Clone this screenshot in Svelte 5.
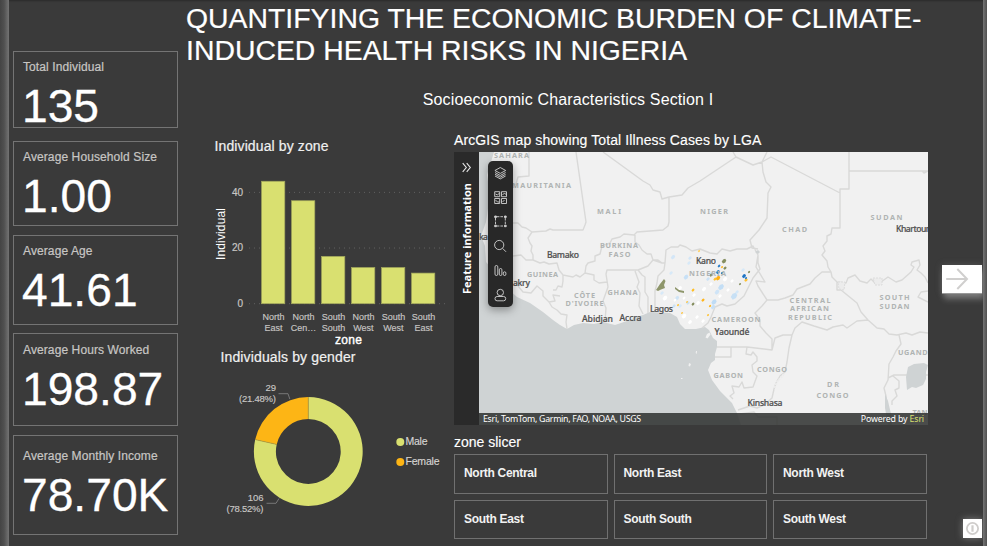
<script>
  const cards = [
    { label: 'Total Individual', value: '135', h: 77, gap: 13, pad: 7 },
    { label: 'Average Household Size', value: '1.00', h: 85, gap: 9, pad: 7 },
    { label: 'Average Age', value: '41.61', h: 90, gap: 8, pad: 7 },
    { label: 'Average Hours Worked', value: '198.87', h: 93, gap: 9, pad: 8 },
    { label: 'Average Monthly Income', value: '78.70K', h: 100, gap: 0, pad: 12 }
  ];

  const bars = [
    { l1: 'North', l2: 'East', v: 44 },
    { l1: 'North', l2: 'Cen…', v: 37 },
    { l1: 'South', l2: 'South', v: 17 },
    { l1: 'North', l2: 'West', v: 13 },
    { l1: 'South', l2: 'West', v: 13 },
    { l1: 'South', l2: 'East', v: 11 }
  ];
  const unit = 2.783;
  const base = 303.7;

  const zones = ['North Central', 'North East', 'North West', 'South East', 'South South', 'South West'];

  const land =
    'M494 152L487 175L490 195L486 222L481 236L485 246L486 262L497 275L507 288L517 297L530 303L543 312L553 320L560 325L567 329L574 325L583 323L594 324L603 322L615 325L627 321L636 317L643 315L650 312L670 313L677 317L680 324L685 329L696 329L705 327L709 330L713 338L717 341L717 347L715 354L715 360L711 363L708 370L712 380L720 391L732 403L737 413L741 425L928 425V152Z';

  const borders = [
    'M529 152L529 176L518 177L516 184L502 188',
    'M576 152L586 222L585 225L583 230L553 230L550 229L546 231L532 232L526 228L522 227L518 223L513 223',
    'M532 232L528 238L530 243L532 246L531 251L533 255L533 260',
    'M513 256L521 255L526 260L533 260L540 263L544 262L549 264L557 263L559 270L563 275L563 281L562 287L558 286L556 290L553 290',
    'M518 286L523 292L531 293L537 286L543 291L543 296L549 302L555 301L553 295L560 296',
    'M563 275L573 277L576 275L580 277L585 273L594 275L594 280L599 283L607 282',
    'M549 302L552 307L557 310L561 314L567 315L566 322L567 329',
    'M585 273L586 266L588 263L595 261L595 256L600 254L602 246L610 243L612 239L620 237L624 234L634 235L637 232L663 230L668 226L669 222L669 197L662 199L660 192L653 190L650 185L643 181L603 152',
    'M669 197L682 195L688 188L700 181L736 157L733 152',
    'M736 157L753 165L762 162L767 152',
    'M762 162L763 172L766 182L771 187L768 193L767 218L759 230L750 240L752 248L758 249',
    'M762 162L771 157L840 193V228H832L831 234L827 236V241L823 246L825 251L822 255L827 261L828 267L831 272L832 277L837 282L837 290L841 290L857 303L861 312L868 320',
    'M849 152V189H840V194M849 171H928M922 171L924 173L928 171',
    'M635 235L635 242L639 245L642 250L647 254L651 254L653 260L658 260L662 263L665 263L666 250L671 247L678 247L680 245L686 247L692 251L700 249L710 253L717 254L722 249L730 251L737 249L747 249L753 246L758 255L758 263L760 269L753 278L748 288L744 296L735 304L727 306L722 304L715 307L711 317L708 323L702 328',
    'M665 263L664 270L658 276L657 283L655 291L655 312',
    'M662 263L653 260L648 266L638 270L642 275L645 277V292L648 297L648 313',
    'M638 270H607L606 274L608 287L603 301L606 308L605 322',
    'M635 271L639 282L637 287L640 293L639 306L643 314',
    'M758 255L756 267L765 282L756 281L758 286L767 300L762 306L755 313L760 320L760 326L766 333L772 339L772 350L747 347H717',
    'M767 300L778 300L785 298L793 295L797 289L810 284L815 278L822 272L831 272',
    'M837 282L846 283L848 278L855 275L860 281L867 283L871 279L876 284L881 282L888 277L896 282L902 280L911 272L914 267L911 265L912 262L919 260L920 265L917 270L921 273L925 277L928 283M928 291L921 292L918 297L928 302',
    'M772 350L775 338L783 335L792 335L795 328L802 322L814 326L827 330L833 327L843 325L847 328L857 321L868 320L877 328L884 329L889 334L897 335L906 333L912 335L920 332L928 333',
    'M792 335L789 348L787 362L785 372L780 376L776 383L774 389L772 398L764 405L757 408L750 406L738 410',
    'M747 347L746 354L751 355L753 352L757 357V361L752 365L753 372L757 376L753 387L744 388L742 382L739 387L732 386L734 393L730 396L733 399',
    'M731 347V357H715',
    'M899 335L901 344L896 351L893 357L889 364L888 380L884 388L886 396L887 405',
    'M888 378L894 375H928M893 376L899 381V388L895 390L897 396L892 401L892 405',
    'M740 414L754 412L758 417H777V425'
  ].join('');

  const countries = [
    ['SAHARA', 494, 157.5, 35], ['MAURITANIA', 512, 188, 59], ['MALI', 597, 214.3, 24],
    ['NIGER', 700, 214.3, 28], ['CHAD', 782, 232.3, 25], ['SUDAN', 870.5, 220, 32],
    ['BURKINA', 600, 248.2, 38], ['FASO', 608.5, 256.7, 22], ['GUINEA', 527, 277.2, 31],
    ['CÔTE', 574, 298.2, 21], ["D'IVOIRE", 565.5, 306.3, 38], ['GHANA', 607.5, 295.3, 30],
    ['NIGERIA', 689, 276.3, 37], ['CAMEROON', 711.5, 321.8, 49], ['CENTRAL', 789.5, 302.8, 41],
    ['AFRICAN', 790, 311.3, 39], ['REPUBLIC', 788, 320, 44], ['SOUTH', 879.5, 300.3, 30],
    ['SUDAN', 879.5, 309, 30], ['GABON', 713.5, 377.8, 29.5], ['CONGO', 757, 372.2, 30],
    ['DR', 827, 386.7, 12], ['CONGO', 816.5, 397.7, 32], ['UGANDA', 898, 355.2, 35], ['TAN', 912.5, 415.3, 15]
  ];
  const cities = [
    ['Bamako', 547, 258, 32], ['akry', 513, 286, 17], ['ka', 479, 240, 9], ['Abidjan', 582, 322, 31],
    ['Accra', 619.5, 320.5, 22], ['Lagos', 650, 312, 23], ['Kano', 696, 263.5, 20],
    ['Yaoundé', 714.5, 335, 35], ['Kinshasa', 747.5, 406, 35], ['Khartoum', 896, 231.5, 38]
  ];

  // Scattered LGA polygons, drawn as small irregular cells: x, y, radius, fill
  const lga = [
    [673, 257, 2.2, '#d3e6f7'], [690, 258, 1.8, '#d3e6f7'], [689, 263, 1.8, '#d7e9f8'], [671, 273, 1.8, '#d7e9f8'],
    [686, 277, 2.4, '#c7e0f6'], [711, 274, 2, '#c7e0f6'], [721, 287, 3, '#c3def5'], [717, 292, 2.4, '#cfe4f7'],
    [734, 296, 3.3, '#c7e0f5'], [737, 292, 1.8, '#d5e8f8'], [665, 298, 2.4, '#fff'], [662, 293, 1.8, '#d7e9f8'],
    [677, 298, 2.2, '#cfe4f6'], [680, 306, 1.8, '#d7e9f8'], [714, 302, 2.7, '#bfdcf5'], [713, 307, 2.2, '#c7e0f5'],
    [688, 303, 1.7, '#cbe2f5'], [694, 295, 1.8, '#fff'], [698, 303, 2, '#fff'], [684, 316, 2.4, '#fff'],
    [697, 317, 1.8, '#fff'], [690, 322, 2, '#fff'], [703, 321, 1.8, '#fff'], [680, 288, 2, '#fff'],
    [704, 289, 2.2, '#fff'], [711, 284, 1.8, '#fff'], [725, 279, 2.3, '#fff'], [732, 281, 1.7, '#fff'],
    [743, 270, 1.8, '#d7e9f8'], [715, 262, 2, '#fff'], [708, 279, 1.8, '#cbe2f6'], [674, 306, 1.7, '#cbe2f6'],
    [675, 300, 1.5, '#fff'], [684, 298, 1.5, '#fff'], [720, 296, 1.8, '#fff'], [728, 290, 1.7, '#fff'],
    [693, 290, 1.5, '#ffbf27'], [699, 251, 1.2, '#ffd166'], [718, 278, 2.3, '#ffae12'], [715, 279, 1.6, '#ffc233'],
    [746, 280, 1.7, '#ffc233'], [703, 300, 1.6, '#ffb51d'], [710, 306, 1.2, '#ffb51d'], [678, 305, 1.1, '#ffc233'],
    [687, 302, 1, '#ffc233'], [722, 267, 1.1, '#ffb51d'], [708, 315, 1.1, '#ffc233'], [682, 313, 1, '#ffc233'],
    [719, 266, 1.4, '#2d7fc9'], [718, 272, 2, '#2d7fc9'], [722, 273, 1.2, '#1d6ab5'], [744, 276, 2, '#1f75c5'],
    [746, 278, 1.1, '#1f75c5'], [724, 261, 2.3, '#858e60'], [725, 268, 1.6, '#858e60'], [711, 275, 1.5, '#858e60'],
    [749, 272, 1.2, '#858e60'], [740, 284, 1.1, '#858e60'], [693, 304, 1.5, '#858e60']
  ];
  const cell = (x, y, r) =>
    `M${x - r} ${y + r * 0.3}l${r * 0.6} ${-r}l${r * 0.9} ${-r * 0.3}l${r * 0.5} ${r * 0.7}l${-r * 0.4} ${r * 0.9}l${-r} ${r * 0.5}z`;
</script>

<div class="page">
  <div class="edge left"></div>

  <aside>
    {#each cards as c}
      <section class="card" style="height:{c.h}px;margin-bottom:{c.gap}px;padding-top:{c.pad}px">
        <div class="label">{c.label}</div>
        <div class="value">{c.value}</div>
      </section>
    {/each}
  </aside>

  <main>
    <h1>QUANTIFYING THE ECONOMIC BURDEN OF CLIMATE-<br />INDUCED HEALTH RISKS IN NIGERIA</h1>
    <h2>Socioeconomic Characteristics Section I</h2>

    <div class="cols">
      <div class="charts">
        <svg width="264" height="414" viewBox="186 132 264 414">
          <text class="title" x="214.5" y="151" textLength="114">Individual by zone</text>
          {#each [0, 20, 40] as t}
            <line class="grid" x1="249" x2="446" y1={base - t * unit} y2={base - t * unit} />
            <text class="tick" x="243" y={base - t * unit + 3.4} text-anchor="end">{t}</text>
          {/each}
          {#each bars as b, i}
            <rect x={261.6 + i * 30} y={base - b.v * unit} width="23.2" height={b.v * unit} fill="#d9e070" stroke="#a2a75c" stroke-width=".7" />
            <text class="cat" x={273.4 + i * 30} y="320" text-anchor="middle">{b.l1}</text>
            <text class="cat" x={273.4 + i * 30} y="331" text-anchor="middle">{b.l2}</text>
          {/each}
          <text class="axis" transform="translate(225.3 234) rotate(-90)" text-anchor="middle" textLength="52">Individual</text>
          <text class="axis strong" x="348.5" y="343.5" text-anchor="middle" textLength="27">zone</text>

          <text class="title" x="220.5" y="362" textLength="135">Individuals by gender</text>
          <g transform="translate(308.3 451.5)">
            <path d="M0 -54.4A54.4 54.4 0 1 1 -53.1 -11.9L-31.6 -7.1A32.4 32.4 0 1 0 0 -32.4Z" fill="#d9e070" />
            <path d="M-53.1 -11.9A54.4 54.4 0 0 1 0 -54.4V-32.4A32.4 32.4 0 0 0 -31.6 -7.1Z" fill="#fdb515" />
            <path d="M0 -54.4V-32.4M-53.1 -11.9L-31.6 -7.1" stroke="#a99a44" stroke-width=".7" />
          </g>
          <path class="leader" d="M278.5 393.7H288L289.8 399M266.5 503.3H276L279 498.5" />
          <text class="data" x="276" y="391" text-anchor="end">29</text>
          <text class="data" x="276" y="402" text-anchor="end" textLength="37">(21.48%)</text>
          <text class="data" x="263.5" y="501" text-anchor="end">106</text>
          <text class="data" x="263.5" y="512" text-anchor="end" textLength="37">(78.52%)</text>
          <circle cx="400.3" cy="442" r="4" fill="#d9e070" />
          <circle cx="400.3" cy="462" r="4" fill="#fdb515" />
          <text class="legend" x="405.5" y="445.3" textLength="22">Male</text>
          <text class="legend" x="405.5" y="465.3" textLength="34">Female</text>
        </svg>
      </div>

      <div class="mapcol">
        <h3 class="maptitle">ArcGIS map showing Total Illness Cases by LGA</h3>
        <div class="mapbox">
          <div class="info">
            <svg width="25" height="273" viewBox="0 0 25 273">
              <path d="M8.7 11.2L12.3 15.5L8.7 19.8M12.7 11.2L16.3 15.5L12.7 19.8" fill="none" stroke="#e8e8e8" stroke-width="1.1" />
              <text transform="translate(16.8 142) rotate(-90)" textLength="111" lengthAdjust="spacingAndGlyphs">Feature information</text>
            </svg>
          </div>
          <div class="map">
            <svg width="449" height="273" viewBox="479 152 449 273">
              <rect x="479" y="152" width="449" height="273" fill="#cfd3d4" />
              <path d={land} fill="#f1f1f1" />
              <path d="M707 334l2.5 -1.5l1 2l-3 4l-2 -1zM696 351l1 0l-.3 3l-1 -1zM689 363l2 1l-1 2.5l-1.5 -.5zM681 378l1.5 0v1h-1.5z" fill="#f1f1f1" />
              <path d={borders} fill="none" stroke="#d9d9d8" stroke-width="1.4" stroke-linejoin="round" />
              <path d="M908 367L914 364L924 363L928 365L926 372L926 379L923 385L916 388L912 387L907 390L906 377ZM885 394L888 401L891 414L892 425H888L885 408ZM755 252l3 -2l2 2l-2 2z" fill="#cfd3d4" />
              <path d="M873 278l9 0l0 7l-7 0zM838 282l7 0l-1 8l-5 -1z" fill="#ececec" stroke="#dcdcdc" stroke-dasharray="2 1" />
              <path d="M784 374l-7 8l-3 7" fill="none" stroke="#ededed" stroke-width="2" stroke-dasharray="2 1" />
              {#each lga as p}
                <path d={cell(p[0], p[1], p[2])} fill={p[3]} />
              {/each}
              <path d="M656 290L660 284L664 279L665.5 281L664 285L665 288L661 289.5L658 291ZM675 287L679 290L684 291L684 293L679 292L675 289Z" fill="#8e966b" />
              {#each countries as c}
                <text class="country" x={c[1]} y={c[2]} textLength={c[3]}>{c[0]}</text>
              {/each}
              {#each cities as c}
                <text class="city" x={c[1]} y={c[2]} textLength={c[3]}>{c[0]}</text>
              {/each}
            </svg>
            <div class="tools">
              <svg width="25" height="146" viewBox="0 0 25 146" fill="none" stroke="#d2d2d2" stroke-width=".9" stroke-linejoin="round">
                <path d="M12.3 6.5L17.7 9.5L12.3 12.4L6.9 9.5ZM7 11.5L12.3 14.5L17.6 11.5M7 13.3L12.3 16.2L17.6 13.3M7 15L12.3 17.9L17.6 15" />
                <path d="M6.7 30.7h5v5h-5zM13.5 30.7h5v5h-5zM6.7 37.5h5v5h-5zM13.5 37.5h5v5h-5zM7.5 33l2 1l2 -2M14.5 34l2 -2l2 2M7.5 39l2 2l2 0M14.5 41l2 -2" />
                <path d="M8.8 55.7h7.3M8.8 65h7.3M7.5 57v6.7M17.3 57v6.7" stroke-dasharray="2.6 1" />
                <path d="M6.7 55h1.7v1.5h-1.7zM16.5 55h1.7v1.5h-1.7zM6.7 64.2h1.7v1.5h-1.7zM16.5 64.2h1.7v1.5h-1.7z" fill="#d2d2d2" />
                <circle cx="11.2" cy="84" r="4.6" /><path d="M14.6 87.4L18 90.8" />
                <rect x="7" y="104.5" width="2.8" height="10" rx="1.4" /><rect x="11.3" y="107.5" width="2.6" height="7" rx="1.3" /><rect x="15.3" y="110.8" width="2.6" height="3.7" rx="1.3" />
                <circle cx="12.3" cy="131.5" r="3.2" /><rect x="7" y="135.5" width="10.7" height="4.3" rx="2.1" />
              </svg>
            </div>
            <div class="credits"><span class="src">Esri, TomTom, Garmin, FAO, NOAA, USGS</span><span class="pow">Powered by <b>Esri</b></span></div>
          </div>
        </div>
        <h3 class="slicer">zone slicer</h3>
        <div class="zones">
          {#each zones as z}
            <button>{z}</button>
          {/each}
        </div>
      </div>
    </div>
  </main>

  <nav>
    <div class="next">
      <svg width="40" height="28" viewBox="0 0 40 28"><path d="M4.2 14H24M15.3 4L25 14L15.3 24" fill="none" stroke="#d0cfce" stroke-width="2" /></svg>
    </div>
    <div class="power">
      <svg width="19" height="19" viewBox="0 0 19 19"><circle cx="9.5" cy="9.5" r="5.6" fill="none" stroke="#cfcdcb" stroke-width="1.8" /><path d="M9.5 6.3v6.4" stroke="#cfcdcb" stroke-width="2.2" /></svg>
    </div>
  </nav>
  <div class="edge right"></div>
</div>

<style>
  :global(body) { background: #3a3a3a; overflow: hidden; }
  .page { width: 987px; height: 546px; display: flex; background: #3a3a3a; color: #fff; font-family: "Liberation Sans", Arial, sans-serif; overflow: hidden; box-shadow: inset 0 2px 2px -1px #2a2a2a; }
  .edge { flex: none; }
  .left { width: 9px; background: linear-gradient(90deg, #444, #505050 45%, #747474); }
  .right { width: 4px; background: linear-gradient(90deg, #757575, #626262 50%, #505050); }
  aside { flex: none; width: 165px; margin-left: 4px; padding-top: 51px; }
  .card { box-sizing: border-box; border: 1px solid #747474; padding-left: 9px; white-space: nowrap; }
  .label { font-size: 12px; line-height: 16px; color: #c8c6c4; letter-spacing: .1px; -webkit-text-stroke: .2px #c8c6c4; }
  .value { font-size: 46.2px; line-height: 52px; margin-top: 5px; margin-left: -1px; -webkit-text-stroke: .3px #fff; }
  main { flex: none; width: 742px; margin-left: 8px; }
  h1 { margin: 2px 0 0; font-size: 28.4px; line-height: 32px; font-weight: 400; height: 64px; white-space: nowrap; -webkit-text-stroke: .2px #fff; }
  h2 { margin: 24px 0 0; padding-left: 22px; font-size: 16px; letter-spacing: .13px; line-height: 20px; height: 20px; font-weight: 400; text-align: center; }
  .cols { display: flex; margin-top: 22px; }
  .charts { flex: none; width: 268px; }
  svg { display: block; }
  .title { font-size: 14px; fill: #f0f0f0; stroke: #f0f0f0; stroke-width: .2px; }
  .grid { stroke: #606060; stroke-width: 1; stroke-dasharray: 1 4; }
  .tick { font-size: 10px; fill: #c8c6c4; stroke: #c8c6c4; stroke-width: .2px; }
  .cat { font-size: 9px; fill: #c8c6c4; stroke: #c8c6c4; stroke-width: .15px; }
  .axis { font-size: 12px; fill: #fff; }
  .strong { stroke: #fff; stroke-width: .4px; }
  .data { font-size: 9.5px; fill: #c8c6c4; stroke: #c8c6c4; stroke-width: .15px; }
  .legend { font-size: 10.5px; fill: #d6d4d2; stroke: #d6d4d2; stroke-width: .15px; }
  .leader { fill: none; stroke: #777; stroke-width: 1; }
  .mapcol { flex: none; width: 474px; }
  h3 { margin: 0; font-size: 14px; font-weight: 400; white-space: nowrap; -webkit-text-stroke: .15px #fff; }
  .maptitle { line-height: 16px; height: 20px; letter-spacing: .11px; }
  .mapbox { display: flex; height: 273px; }
  .info { width: 25px; background: #2a2a2a; }
  .info text { font: 700 10.8px "Noto Sans", sans-serif; fill: #fff; }
  .map { position: relative; width: 449px; height: 273px; overflow: hidden; }
  .country { font: 700 7.3px "Noto Sans", sans-serif; fill: #b0b4b3; stroke: none; }
  .city { font: 500 8.6px "Noto Sans", sans-serif; fill: #505050; stroke: #505050; stroke-width: .2px; }
  .tools { position: absolute; left: 9px; top: 9px; width: 25px; height: 146px; border-radius: 5px; background: #282828; box-shadow: 0 3px 9px rgba(0, 0, 0, .35); }
  .credits { position: absolute; left: 0; bottom: 0; width: 100%; height: 12px; box-sizing: border-box; padding: 0 4px; display: flex; justify-content: space-between; background: rgba(50, 52, 51, .88); font: 8.8px/13px "Noto Sans", sans-serif; color: #fff; }
  .src { letter-spacing: -.28px; }
  .pow { letter-spacing: -.15px; }
  .credits b { font-weight: 400; color: #d9e070; }
  .slicer { margin-top: 7px; line-height: 20px; height: 22px; }
  .zones { display: grid; grid-template-columns: repeat(3, 153.5px); gap: 6px; grid-auto-rows: 39.5px; }
  button { box-sizing: border-box; margin: 0; padding: 0 0 1px 9px; border: 1px solid #707070; background: none; color: #f2f2f2; font: 700 12px "Liberation Sans", Arial, sans-serif; letter-spacing: -.3px; text-align: left; }
  nav { flex: none; width: 55px; display: flex; flex-direction: column; align-items: flex-end; }
  .next { margin: 265px 1px 0 0; width: 40px; height: 28px; background: #fff; box-shadow: 0 1px 0 #999, 2px 6px 6px rgba(190, 190, 190, .45), 0 0 7px rgba(170, 170, 170, .25); }
  .power { margin: 226px 1px 0 0; width: 19px; height: 19px; background: #fff; box-shadow: 0 0 7px rgba(190, 190, 190, .5); }
</style>
